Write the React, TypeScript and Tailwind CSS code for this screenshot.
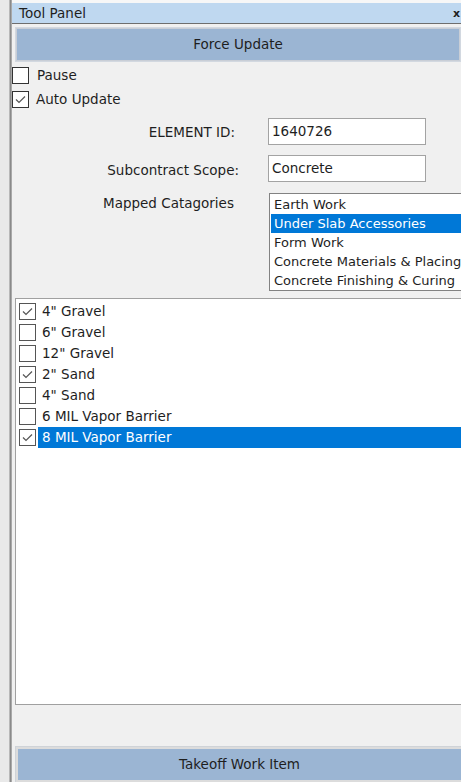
import React, { useState } from 'react';

const font = { fontFamily: '"DejaVu Sans", "Liberation Sans", sans-serif' };

const categories = [
  'Earth Work',
  'Under Slab Accessories',
  'Form Work',
  'Concrete Materials & Placing',
  'Concrete Finishing & Curing',
];

const initialItems = [
  { name: '4" Gravel', checked: true },
  { name: '6" Gravel', checked: false },
  { name: '12" Gravel', checked: false },
  { name: '2" Sand', checked: true },
  { name: '4" Sand', checked: false },
  { name: '6 MIL Vapor Barrier', checked: false },
  { name: '8 MIL Vapor Barrier', checked: true },
];

const Check: React.FC<{ on: boolean; dark?: boolean }> = ({ on, dark }) => (
  <span
    className={`flex h-[17px] w-[17px] shrink-0 items-center justify-center bg-white border ${
      dark ? 'border-[#333333]' : 'border-[#555555]'
    }`}
  >
    {on && (
      <svg width="13" height="13" viewBox="0 0 13 13">
        <path d="M2 6.5 L5 9.5 L11 3.5" fill="none" stroke="#555555" strokeWidth="1.2" />
      </svg>
    )}
  </span>
);

export default function App() {
  const [paused, setPaused] = useState(false);
  const [autoUpdate, setAutoUpdate] = useState(true);
  const [category, setCategory] = useState(1);
  const [items, setItems] = useState(initialItems);
  const [selected, setSelected] = useState(6);

  const toggleItem = (i: number) => {
    setItems(prev => prev.map((it, idx) => (idx === i ? { ...it, checked: !it.checked } : it)));
  };

  return (
    <div className="flex h-[782px] w-[461px] overflow-hidden bg-[#f0f0f0] text-[13px] text-[#1e1e1e]" style={font}>
      {/* dock edge */}
      <div className="w-[9px] shrink-0 bg-[#e9e9e9]" />
      <div className="flex w-[3px] shrink-0">
        <div className="w-px bg-[#b8b8b8]" />
        <div className="w-px bg-[#8a8a8a]" />
        <div className="w-px bg-[#a9a9a9]" />
      </div>

      <div className="flex min-w-0 flex-1 flex-col">
        <div className="h-[3px] bg-[#f7f7f7]" />
        <div className="flex h-[20px] items-center justify-between overflow-hidden bg-[#bfd8f0] pl-[7px]">
          <span className="text-[13.5px]">Tool Panel</span>
          <span className="pr-px text-[11px] font-bold leading-none">x</span>
        </div>
        <div className="h-px bg-[#6e6e6e]" />

        <div className="pl-[3px] pt-[3px]">
          <div className="border border-[#d2d8e0] bg-[#c9ced6] p-px">
            <button className="flex h-[31px] w-full items-center justify-center bg-[#9bb5d3] text-[13.5px]">
              Force Update
            </button>
          </div>
        </div>

        <div className="mt-[4px] flex flex-col gap-[6px] text-[13.5px]">
          <label className="flex h-[18px] items-center gap-[8px]" onClick={() => setPaused(!paused)}>
            <Check on={paused} dark />
            <span>Pause</span>
          </label>
          <label className="flex h-[18px] items-center gap-[7px]" onClick={() => setAutoUpdate(!autoUpdate)}>
            <Check on={autoUpdate} dark />
            <span>Auto Update</span>
          </label>
        </div>

        <div className="mt-[10px] flex flex-col text-[13.5px]">
          <div className="flex h-[27px] items-center">
            <span className="w-[223px] pt-[2px] text-right">ELEMENT ID:</span>
            <div className="ml-[33px] flex h-[27px] w-[158px] items-center border border-[#a3a3a3] bg-white px-[3px]">
              1640726
            </div>
          </div>
          <div className="mt-[10px] flex h-[27px] items-center">
            <span className="w-[227px] pt-[3px] text-right">Subcontract Scope:</span>
            <div className="ml-[29px] flex h-[27px] w-[158px] items-center border border-[#a3a3a3] bg-white px-[3px]">
              Concrete
            </div>
          </div>
          <div className="mt-[11px] flex">
            <span className="w-[257px] pl-[91px]">Mapped Catagories</span>
            <div className="-mr-[10px] h-[98px] flex-1 border border-[#828282] bg-white pl-px pt-px text-[13px]">
              {categories.map((c, i) => (
                <div
                  key={c}
                  onClick={() => setCategory(i)}
                  className={`flex h-[19px] items-center whitespace-nowrap pl-[3px] ${
                    category === i ? 'bg-[#0078d7] text-white' : ''
                  }`}
                >
                  {c}
                </div>
              ))}
            </div>
          </div>
        </div>

        <div className="mt-[7px] ml-[3px] h-[407px] border-l border-t border-b border-[#a0a0a0] bg-white pt-[2px] text-[13.5px]">
          {items.map((it, i) => (
            <div key={it.name} className="flex h-[21px] items-center pl-[3px]">
              <span onClick={() => toggleItem(i)}>
                <Check on={it.checked} />
              </span>
              <span
                onClick={() => setSelected(i)}
                className={`ml-[2px] flex h-[21px] flex-1 items-center pl-[4px] ${
                  selected === i ? 'bg-[#0078d7] text-white' : ''
                }`}
              >
                {it.name}
              </span>
            </div>
          ))}
        </div>

        <div className="flex-1" />

        <div className="ml-[3px] border-l border-t border-[#cfd3d8] bg-[#dcdcdc] pl-[2px] pt-[2px]">
          <button className="flex h-[31px] w-full items-center justify-center bg-[#9bb5d3] text-[13.5px]">
            Takeoff Work Item
          </button>
          <div className="h-[2px]" />
        </div>
      </div>
    </div>
  );
}
